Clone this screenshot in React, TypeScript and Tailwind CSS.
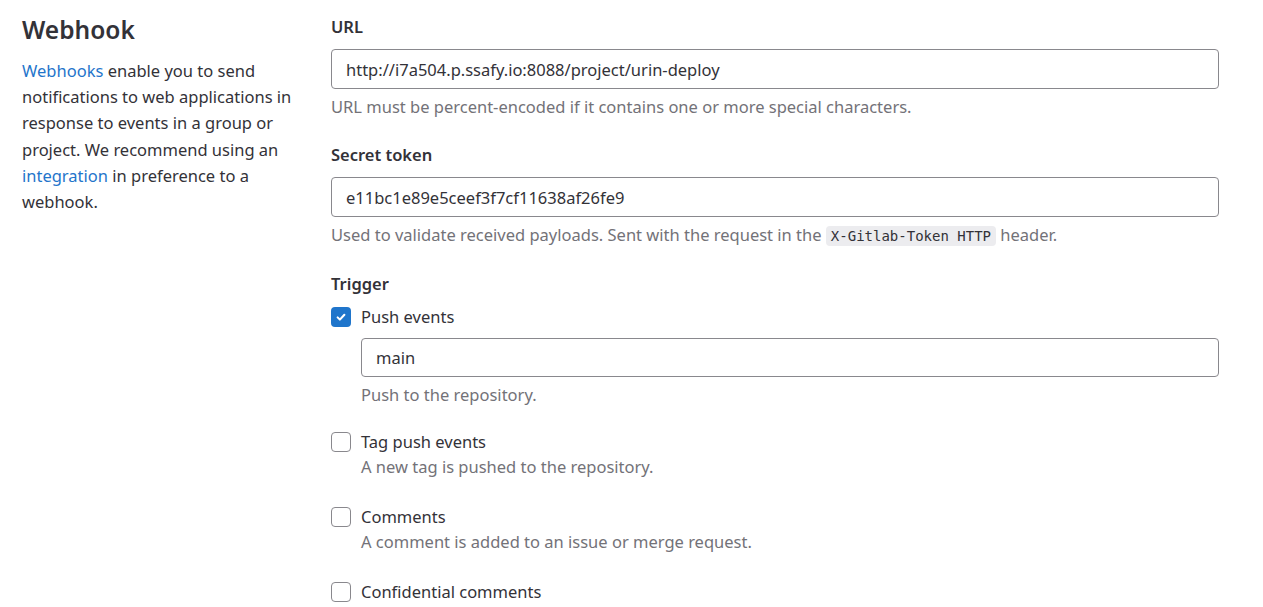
import React from 'react';

const Checkbox = ({ checked }: { checked?: boolean }) =>
  checked ? (
    <span className="mt-[3px] flex h-[20px] w-[20px] shrink-0 items-center justify-center rounded-[4px] bg-[#1f75cb]">
      <svg width="12" height="12" viewBox="0 0 16 16" fill="none">
        <path d="M3.5 8.5l3 3 6-6.5" stroke="white" strokeWidth="2.8" strokeLinecap="round" strokeLinejoin="round" />
      </svg>
    </span>
  ) : (
    <span className="mt-[3px] block h-[20px] w-[20px] shrink-0 rounded-[4px] border border-[#89888d] bg-white" />
  );

const TriggerItem = ({ label, help }: { label: string; help?: string }) => (
  <div className="flex gap-[10px]">
    <Checkbox />
    <div>
      <div className="leading-[26px]">{label}</div>
      {help && <div className="leading-[24px] text-[#737278]">{help}</div>}
    </div>
  </div>
);

export default function App() {
  return (
    <div
      className="flex min-h-screen bg-white text-[16.5px] text-[#333238]"
      style={{ fontFamily: '"Noto Sans", sans-serif' }}
    >
      {/* Left description */}
      <div className="w-[309px] shrink-0 pl-[22px] pr-[12px] pt-[12px]">
        <h2 className="mb-[10px] text-[24.5px] font-semibold leading-[36px]">Webhook</h2>
        <p className="leading-[26.2px]">
          <a className="text-[#1f75cb]" href="#">Webhooks</a> enable you to send notifications to web
          applications in response to events in a group or project. We recommend using an{' '}
          <a className="text-[#1f75cb]" href="#">integration</a> in preference to a webhook.
        </p>
      </div>

      {/* Right form */}
      <div className="mr-[44px] flex-1 pl-[22px] pt-[14px]">
        <label className="block font-semibold leading-[26px]">URL</label>
        <input
          className="mt-[9px] block h-[40px] w-full rounded-[4px] border border-[#89888d] px-[14px] text-[#333238] outline-none"
          defaultValue="http://i7a504.p.ssafy.io:8088/project/urin-deploy"
        />
        <p className="mt-[6px] leading-[24px] text-[#737278]">
          URL must be percent-encoded if it contains one or more special characters.
        </p>

        <label className="mt-[23px] block font-semibold leading-[26px]">Secret token</label>
        <input
          className="mt-[9px] block h-[40px] w-full rounded-[4px] border border-[#89888d] px-[14px] text-[#333238] outline-none"
          defaultValue="e11bc1e89e5ceef3f7cf11638af26fe9"
        />
        <p className="mt-[6px] leading-[24px] text-[#737278]">
          Used to validate received payloads. Sent with the request in the{' '}
          <code
            className="rounded-[4px] bg-[#ececef] px-[5px] py-[2px] text-[14px] text-[#333238]"
            style={{ fontFamily: '"DejaVu Sans Mono", monospace' }}
          >
            X-Gitlab-Token HTTP
          </code>{' '}
          header.
        </p>

        <label className="mt-[23px] block font-semibold leading-[26px]">Trigger</label>

        <div className="mt-[7px] flex gap-[10px]">
          <Checkbox checked />
          <div className="flex-1">
            <div className="leading-[26px]">Push events</div>
            <input
              className="mt-[8px] block h-[39px] w-full rounded-[4px] border border-[#89888d] px-[14px] text-[#333238] outline-none"
              defaultValue="main"
            />
            <div className="mt-[6px] leading-[24px] text-[#737278]">Push to the repository.</div>
          </div>
        </div>

        <div className="mt-[22px] flex flex-col gap-[25px]">
          <TriggerItem label="Tag push events" help="A new tag is pushed to the repository." />
          <TriggerItem label="Comments" help="A comment is added to an issue or merge request." />
          <TriggerItem label="Confidential comments" />
        </div>
      </div>
    </div>
  );
}
